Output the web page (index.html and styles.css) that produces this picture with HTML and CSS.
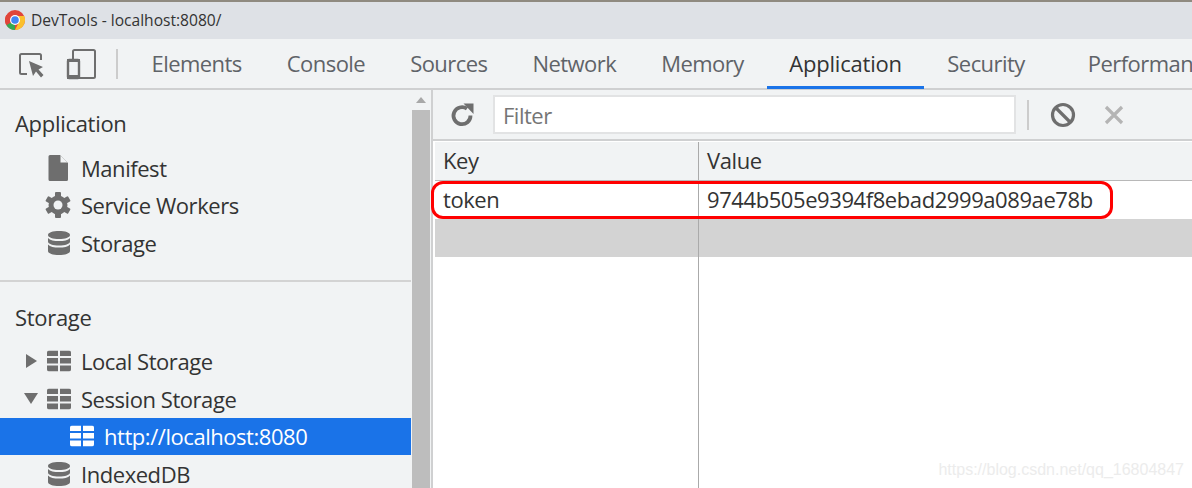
FILE: index.html
```html
<!DOCTYPE html>
<html lang="en">
<head>
  <meta charset="UTF-8" />
  <title>DevTools - localhost:8080/</title>
  <link rel="stylesheet" href="styles.css">
</head>
<body>
  <div class="titlebar">
    <svg class="chrome-logo" viewBox="0 0 20 20" width="20" height="20">
      <circle cx="10" cy="10" r="10" fill="#e0453a"/>
      <path d="M10 10 L1.3 15 A10 10 0 0 0 10 20 Z" fill="#34a853"/>
      <path d="M10 6 H19.2 A10 10 0 0 1 10 20 L14 12 Z" fill="#fbc02d"/>
      <path d="M10 6 L1.3 5 A10 10 0 0 0 1.3 15 L6.5 12 Z" fill="#e0453a"/>
      <circle cx="10" cy="10" r="5" fill="#fff"/>
      <circle cx="10" cy="10" r="3.8" fill="#4285f4"/>
    </svg>
    <span class="title-text">DevTools - localhost:8080/</span>
  </div>

  <div class="tabbar">
    <div class="tool-icons">
      <svg viewBox="0 0 26 28" width="26" height="28" class="tool-icon">
        <path d="M9 24H3.5A1.5 1.5 0 0 1 2 22.5V5.5A1.5 1.5 0 0 1 3.5 4H21.5A1.5 1.5 0 0 1 23 5.5V10" fill="none" stroke="#6e6e6e" stroke-width="2"/>
        <path d="M11 11L25 17L20.5 19.5L25.5 25L23 27.5L18 21.5L15 26Z" fill="#6e6e6e"/>
      </svg>
      <svg viewBox="0 0 30 32" width="30" height="32" class="tool-icon">
        <path d="M7 11V3.5A1.5 1.5 0 0 1 8.500 2H27.500A1.500 1.500 0 0 1 29 3.500V28.500A1.500 1.500 0 0 1 27.500 30H13" fill="none" stroke="#6e6e6e" stroke-width="2"/>
        <rect x="2" y="12" width="11" height="18" rx="1" fill="none" stroke="#6e6e6e" stroke-width="2.400"/>
        <rect x="1" y="27" width="13" height="4" fill="#6e6e6e"/>
        <rect x="1" y="11" width="13" height="3" fill="#6e6e6e"/>
      </svg>
    </div>
    <span class="tab-divider"></span>
    <nav class="tabs">
      <span class="tab">Elements</span>
      <span class="tab">Console</span>
      <span class="tab">Sources</span>
      <span class="tab">Network</span>
      <span class="tab">Memory</span>
      <span class="tab active">Application</span>
      <span class="tab">Security</span>
      <span class="tab last">Performance</span>
    </nav>
  </div>

  <div class="main">
    <aside class="sidebar">
      <div class="tree">
        <h2 class="section-title">Application</h2>
        <div class="row">
          <svg class="icon file" viewBox="0 0 20 26" width="20" height="26"><path d="M2 0H12L20 8V24.500A1.500 1.500 0 0 1 18.500 26H2A1.500 1.500 0 0 1 .5 24.500V1.500A1.500 1.500 0 0 1 2 0Z" fill="#6e6e6e"/><path d="M12.500 .5L19.500 7.500H12.500Z" fill="#f1f3f4"/></svg>
          <span>Manifest</span>
        </div>
        <div class="row">
          <svg class="icon gear" viewBox="0 0 26 26" width="26" height="26"><g fill="#6e6e6e"><circle cx="13" cy="13" r="9.500"/><rect x="10" y="0" width="6" height="26" rx="1"/><rect x="10" y="0" width="6" height="26" rx="1" transform="rotate(60 13 13)"/><rect x="10" y="0" width="6" height="26" rx="1" transform="rotate(120 13 13)"/></g><circle cx="13" cy="13" r="4.500" fill="#f1f3f4"/></svg>
          <span>Service Workers</span>
        </div>
        <div class="row">
          <svg class="icon" viewBox="0 0 24 24" width="24" height="24"><use href="#db"/></svg>
          <span>Storage</span>
        </div>
        <div class="separator"></div>
        <h2 class="section-title">Storage</h2>
        <div class="row">
          <span class="arrow right"></span>
          <svg class="icon" viewBox="0 0 24 21" width="24" height="21"><use href="#grid"/></svg>
          <span>Local Storage</span>
        </div>
        <div class="row">
          <span class="arrow down"></span>
          <svg class="icon" viewBox="0 0 24 21" width="24" height="21"><use href="#grid"/></svg>
          <span>Session Storage</span>
        </div>
        <div class="row selected">
          <svg class="icon" viewBox="0 0 24 21" width="24" height="21"><use href="#grid"/></svg>
          <span>http://localhost:8080</span>
        </div>
        <div class="row">
          <svg class="icon" viewBox="0 0 24 24" width="24" height="24"><use href="#db"/></svg>
          <span>IndexedDB</span>
        </div>
      </div>
      <div class="scrollbar">
        <span class="scroll-up"></span>
        <span class="scroll-thumb"></span>
      </div>
    </aside>

    <section class="content">
      <div class="content-toolbar">
        <svg class="refresh" viewBox="0 0 24 24" width="24" height="24">
          <path d="M20.500 12.500A8.500 8.500 0 1 1 17 5.800" fill="none" stroke="#6e6e6e" stroke-width="3.800"/>
          <path d="M13.500 0.500L23.500 0.500V11Z" fill="#6e6e6e"/>
        </svg>
        <div class="filter">Filter</div>
        <span class="toolbar-divider"></span>
        <svg class="clear" viewBox="0 0 26 26" width="26" height="26">
          <circle cx="13" cy="13" r="10.500" fill="none" stroke="#6e6e6e" stroke-width="3.200"/>
          <path d="M5.500 5.500L20.500 20.500" stroke="#6e6e6e" stroke-width="3.200"/>
        </svg>
        <svg class="delete" viewBox="0 0 20 20" width="20" height="20">
          <path d="M2 2L18 18M18 2L2 18" stroke="#b4b4b4" stroke-width="3.200"/>
        </svg>
      </div>
      <div class="grid-wrap">
        <div class="grid-row grid-head"><span class="key">Key</span><span class="value">Value</span></div>
        <div class="grid-row"><span class="key">token</span><span class="value">9744b505e9394f8ebad2999a089ae78b</span></div>
        <div class="grid-row grid-grey"><span class="key"></span><span class="value"></span></div>
        <div class="grid-row grid-fill"><span class="key"></span><span class="value"></span></div>
        <div class="red-ring"></div>
        <div class="watermark">https://blog.csdn.net/qq_16804847</div>
      </div>
    </section>
  </div>

  <svg class="defs" width="0" height="0">
    <symbol id="db" viewBox="0 0 24 24">
      <path d="M12 0C18 0 23 1.500 23 4S18 8 12 8 1 6.500 1 4 6 0 12 0ZM1 7C3 9.500 7 10 12 10S21 9.500 23 7V10.500C23 13 18 14.500 12 14.500S1 13 1 10.500ZM1 13.500C3 16 7 16.500 12 16.500S21 16 23 13.500V20C23 22.500 18 24 12 24S1 22.500 1 20Z" fill="currentColor"/>
    </symbol>
    <symbol id="grid" viewBox="0 0 24 21">
      <path d="M2 0H11V5.500H0V2A2 2 0 0 1 2 0ZM13 0H22A2 2 0 0 1 24 2V5.500H13ZM0 7.500H11V13H0ZM13 7.500H24V13H13ZM0 15H11V21H2A2 2 0 0 1 0 19ZM13 15H24V19A2 2 0 0 1 22 21H13Z" fill="currentColor"/>
    </symbol>
  </svg>
</body>
</html>
```

FILE: styles.css
```css
* {
  box-sizing: border-box;
}
html, body {
  height: 100%;
}
body {
  margin: 0;
  height: 488px;
  overflow: hidden;
  display: flex;
  flex-direction: column;
  background: #fff;
  font-family: 'Open Sans', sans-serif;
  color: #303942;
}
.defs {
  position: absolute;
}

/* title bar */
.titlebar {
  flex: 0 0 39px;
  display: flex;
  align-items: center;
  padding-left: 5px;
  padding-bottom: 1px;
  background: #dee1e6;
  border-top: 2px solid #8f8a80;
  font-size: 15.600px;
  color: #333;
}
.chrome-logo {
  margin-right: 6px;
}

/* tabs */
.tabbar {
  flex: 0 0 51px;
  display: flex;
  align-items: stretch;
  background: #f1f3f4;
  border-bottom: 2px solid #cfd0d1;
}
.tool-icons {
  flex: none;
  display: flex;
  align-items: center;
  gap: 22px;
  padding-left: 18px;
  width: 116px;
}
.tab-divider {
  flex: none;
  width: 2px;
  height: 30px;
  align-self: center;
  background: #ccc;
}
.tabs {
  display: flex;
  padding-left: 11px;
  white-space: nowrap;
}
.tab {
  display: flex;
  align-items: center;
  padding: 0 22.500px 2px;
  font-size: 22px;
  color: #5f6368;
  letter-spacing: -0.55px;
}
.tab.active {
  color: #333;
  letter-spacing: -0.2px;
  margin: 0 1px -1px;
  padding: 0 22px 3px;
  box-shadow: inset 0 -3px 0 #1a73e8;
}
.tab.last {
  margin-left: 18px;
}

/* main */
.main {
  flex: 1;
  display: flex;
  min-height: 0;
}
.sidebar {
  flex: 0 0 433px;
  display: flex;
  background: #f1f3f4;
  border-right: 2px solid #cfd0d1;
}
.tree {
  width: 411px;
  padding-top: 14px;
}
.section-title {
  margin: 0 0 7px;
  height: 38px;
  line-height: 38px;
  padding-left: 15px;
  font-size: 22px;
  font-weight: 400;
  letter-spacing: -0.3px;
  color: #333;
}
.row {
  position: relative;
  height: 37.500px;
  display: flex;
  align-items: center;
  padding-left: 81px;
  font-size: 22px;
  letter-spacing: -0.45px;
  color: #333;
}
.icon {
  position: absolute;
  left: 47px;
  top: 50%;
  transform: translateY(-50%);
  color: #6e6e6e;
}
.icon.gear {
  left: 45px;
}
.icon.file {
  left: 48px;
}
.separator {
  height: 2px;
  margin: 18px 0 16px;
  background: #d3d3d3;
}
.row.selected {
  padding-left: 104px;
  background: #1a73e8;
  color: #fff;
}
.row.selected .icon {
  left: 70px;
  color: #fff;
}
.arrow {
  position: absolute;
  width: 0;
  height: 0;
}
.arrow.right {
  left: 26px;
  top: 11px;
  border-left: 11px solid #6e6e6e;
  border-top: 7.500px solid transparent;
  border-bottom: 7.500px solid transparent;
}
.arrow.down {
  left: 24px;
  top: 13px;
  border-top: 11px solid #6e6e6e;
  border-left: 7.500px solid transparent;
  border-right: 7.500px solid transparent;
}
.scrollbar {
  width: 18px;
  margin-left: 1px;
  display: flex;
  flex-direction: column;
  align-items: center;
}
.scroll-up {
  width: 0;
  height: 0;
  margin: 7px 0 7px;
  border-bottom: 6px solid #a8a8a8;
  border-left: 5px solid transparent;
  border-right: 5px solid transparent;
}
.scroll-thumb {
  flex: 1;
  width: 100%;
  background: #bdbdbd;
}

/* right side */
.content {
  flex: 1;
  min-width: 0;
  display: flex;
  flex-direction: column;
}
.content-toolbar {
  flex: 0 0 51px;
  display: flex;
  align-items: center;
  background: #f1f3f4;
  border-bottom: 2px solid #cfd0d1;
}
.refresh {
  margin-left: 17px;
}
.filter {
  width: 523px;
  height: 39px;
  margin-left: 19px;
  padding-left: 8px;
  line-height: 36px;
  background: #fff;
  border: 2px solid #e2e3e4;
  font-size: 22px;
  letter-spacing: -0.5px;
  color: #757575;
}
.toolbar-divider {
  width: 2px;
  height: 30px;
  margin-left: 11px;
  background: #ccc;
}
.clear {
  margin-left: 21px;
}
.delete {
  margin-left: 28px;
}
.grid-wrap {
  position: relative;
  flex: 1;
  display: flex;
  flex-direction: column;
  padding-left: 2px;
}
.grid-row {
  flex: 0 0 38px;
  display: flex;
  font-size: 22px;
  letter-spacing: -0.42px;
  color: #333;
}
.grid-row .key {
  width: 264px;
  padding-left: 8px;
  line-height: 37px;
  border-right: 1px solid #aaa;
}
.grid-row .value {
  flex: 1;
  padding-left: 8px;
  line-height: 37px;
}
.grid-head {
  flex-basis: 40px;
  background: #f1f3f4;
  border-top: 1px solid #fff;
  border-bottom: 1px solid #b8b8b8;
}
.grid-grey {
  background: #d3d3d3;
}
.grid-fill {
  flex: 1;
}
.red-ring {
  position: absolute;
  left: -2px;
  top: 40px;
  width: 682px;
  height: 38px;
  border: 3px solid #f00;
  border-radius: 12px;
}
.watermark {
  position: absolute;
  right: 8px;
  bottom: 9px;
  font-family: 'Liberation Sans', sans-serif;
  font-size: 16px;
  color: #ececec;
}
```
